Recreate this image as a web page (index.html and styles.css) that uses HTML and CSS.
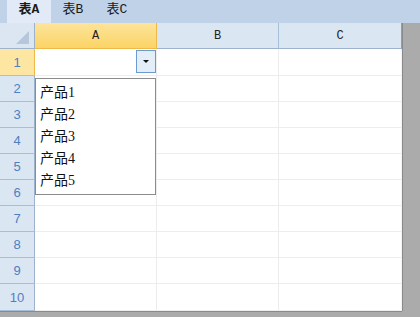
FILE: index.html
```html
<!DOCTYPE html>
<html lang="zh">
<head>
    <meta charset="UTF-8">
    <title>Sheet</title>
    <link rel="stylesheet" href="styles.css">
</head>
<body>

    <div class="tabs">
        <div class="tab active">表A</div>
        <div class="tab">表B</div>
        <div class="tab">表C</div>
    </div>

    <div class="sheet">
        <div class="corner"><span class="corner-mark"></span></div>
        <div class="col-head current">A</div>
        <div class="col-head">B</div>
        <div class="col-head last">C</div>

        <div class="row-head current tall">1</div>
        <div class="cell tall dd-cell"><span class="dd-btn"></span></div>
        <div class="cell tall"></div>
        <div class="cell tall last"></div>

        <div class="row-head">2</div><div class="cell"></div><div class="cell"></div><div class="cell last"></div>
        <div class="row-head">3</div><div class="cell"></div><div class="cell"></div><div class="cell last"></div>
        <div class="row-head">4</div><div class="cell"></div><div class="cell"></div><div class="cell last"></div>
        <div class="row-head">5</div><div class="cell"></div><div class="cell"></div><div class="cell last"></div>
        <div class="row-head">6</div><div class="cell"></div><div class="cell"></div><div class="cell last"></div>
        <div class="row-head">7</div><div class="cell"></div><div class="cell"></div><div class="cell last"></div>
        <div class="row-head">8</div><div class="cell"></div><div class="cell"></div><div class="cell last"></div>
        <div class="row-head">9</div><div class="cell"></div><div class="cell"></div><div class="cell last"></div>
        <div class="row-head tall">10</div><div class="cell tall"></div><div class="cell tall"></div><div class="cell tall last"></div>

        <ul class="dropdown">
            <li>产品1</li>
            <li>产品2</li>
            <li>产品3</li>
            <li>产品4</li>
            <li>产品5</li>
        </ul>
    </div>

</body>
</html>
```

FILE: styles.css
```css
body {
    margin: 0;
    background-color: #ababab;
    font-family: "Liberation Sans", "Noto Sans CJK SC", sans-serif;
    width: 420px;
    height: 317px;
    overflow: hidden;
}

.tabs {
    display: flex;
    height: 23px;
    padding-left: 7px;
    background-color: #c0d2e8;
}

.tab {
    width: 44px;
    line-height: 20px;
    text-align: center;
    font-family: "Liberation Mono", "Noto Sans CJK SC", monospace;
    font-size: 13px;
    color: #1a1a1a;
}

.tab.active {
    background-color: #e1eaf6;
    font-weight: bold;
}

.sheet {
    position: relative;
    display: grid;
    grid-template-columns: 35px 122px 122px 123px;
    grid-template-rows: 26px 27px repeat(8, 26px) 27px;
    width: 402px;
    background-color: #fff;
    box-shadow: 1px 0 0 #8a8a8a, 0 1px 0 #8a8a8a;
}

.corner {
    position: relative;
    background-color: #dce6f2;
    border-right: 1px solid #9db3cc;
    border-bottom: 1px solid #9db3cc;
}

.corner-mark {
    position: absolute;
    right: 5px;
    bottom: 4px;
    width: 0;
    height: 0;
    border-left: 13px solid transparent;
    border-bottom: 13px solid #b6c7dc;
}

.col-head {
    background-color: #dbe6f3;
    border-right: 1px solid #a8bdd6;
    border-bottom: 1px solid #9db3cc;
    text-align: center;
    line-height: 27px;
    font-family: "Liberation Mono", monospace;
    font-size: 12px;
    color: #222;
}

.col-head.current {
    background: linear-gradient(#fde49b, #fbd466);
    border-right-color: #f0b848;
    border-bottom-color: #f0b848;
}

.col-head.last {
    border-right-color: #8f9eb2;
}

.row-head {
    background-color: #dbe6f3;
    border-right: 1px solid #9db3cc;
    border-bottom: 1px solid #a8bdd6;
    display: flex;
    align-items: center;
    justify-content: center;
    font-size: 13px;
    color: #4f7fbf;
}

.row-head.current {
    background-color: #fde6a2;
    border-right-color: #f0b848;
    border-bottom-color: #f0b848;
}

.cell {
    border-right: 1px solid #ececec;
    border-bottom: 1px solid #ededed;
}

.cell.last {
    border-right-color: #f4f4f4;
}

.dd-cell {
    display: flex;
    justify-content: flex-end;
    align-items: flex-start;
    padding: 1px 0 0;
}

.dd-btn {
    position: relative;
    width: 18px;
    height: 21px;
    border: 1px solid #6b9bd0;
    background-color: #e4eef9;
}

.dd-btn::after {
    content: "";
    position: absolute;
    left: 6px;
    top: 9px;
    border-left: 3px solid transparent;
    border-right: 3px solid transparent;
    border-top: 3px solid #111;
}

.dropdown {
    position: absolute;
    left: 35px;
    top: 55px;
    width: 119px;
    margin: 0;
    padding: 3px 0 2px;
    list-style: none;
    background-color: #fff;
    border: 1px solid #8c8c8c;
}

.dropdown li {
    height: 22px;
    line-height: 22px;
    padding-left: 4px;
    font-family: "Liberation Serif", "Noto Sans CJK SC", serif;
    font-size: 14px;
    color: #111;
}
```
